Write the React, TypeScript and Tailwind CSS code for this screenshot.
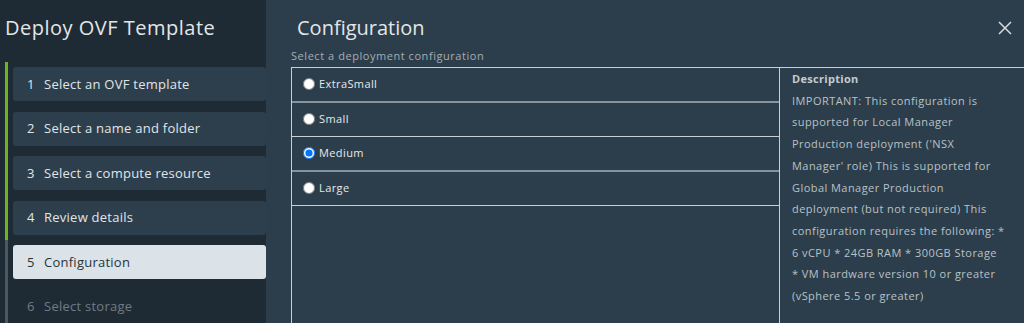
import React from 'react';

const steps = [
  { n: 1, label: 'Select an OVF template', state: 'done' },
  { n: 2, label: 'Select a name and folder', state: 'done' },
  { n: 3, label: 'Select a compute resource', state: 'done' },
  { n: 4, label: 'Review details', state: 'done' },
  { n: 5, label: 'Configuration', state: 'current' },
  { n: 6, label: 'Select storage', state: 'todo' },
];

const configs = [
  { name: 'ExtraSmall', border: 'border-b-2 border-[#87929a]' },
  { name: 'Small', border: 'border-b border-[#c9d0d5]' },
  { name: 'Medium', border: 'border-b-2 border-[#87929a]', checked: true },
  { name: 'Large', border: 'border-b border-[#c9d0d5]' },
];

const description = [
  'IMPORTANT: This configuration is',
  'supported for Local Manager',
  "Production deployment ('NSX",
  "Manager' role) This is supported for",
  'Global Manager Production',
  'deployment (but not required) This',
  'configuration requires the following: *',
  '6 vCPU * 24GB RAM * 300GB Storage',
  '* VM hardware version 10 or greater',
  '(vSphere 5.5 or greater)',
];

export default function App() {
  return (
    <div className="flex h-[323px] w-[1024px] overflow-hidden bg-[#2c3e4b] font-['Open_Sans',sans-serif]">
      {/* Wizard sidebar */}
      <aside className="w-[266px] shrink-0 bg-[#1f2b34]">
        <h1 className="pl-[5px] pt-[14px] text-[20px] leading-[28px] text-[#e3e6e8] tracking-[0.5px]">
          Deploy OVF Template
        </h1>
        <ol className="mt-[20px] ml-[5px]">
          {steps.map((s) => (
            <li
              key={s.n}
              className={`flex h-[44.5px] items-center border-l-[3px] pl-[5px] ${
                s.state === 'done' ? 'border-[#6cb31e]' : 'border-[#4b5861]'
              }`}
            >
              <div
                className={`flex h-[34px] w-full items-center rounded-[3px] pl-[14px] text-[13px] tracking-[0.25px] ${
                  s.state === 'done'
                    ? 'bg-[#2d3f4c] text-[#e1e5e8]'
                    : s.state === 'current'
                    ? 'bg-[#dbe3e9] text-[#2a343b]'
                    : 'text-[#6f7b84]'
                }`}
              >
                <span className="w-[17px]">{s.n}</span>
                <span>{s.label}</span>
              </div>
            </li>
          ))}
        </ol>
      </aside>

      {/* Main panel */}
      <main className="flex min-w-0 flex-1 flex-col pl-[25px]">
        <div className="flex items-center justify-between pt-[14px]">
          <h2 className="pl-[6px] text-[20px] leading-[28px] text-[#e3e6e8]">Configuration</h2>
          <button className="mr-[12px] text-[#d5dbdf]">
            <svg width="14" height="14" viewBox="0 0 14 14" fill="none" stroke="currentColor" strokeWidth="1.5">
              <path d="M1 1l12 12M13 1L1 13" />
            </svg>
          </button>
        </div>
        <p className="mt-[6px] text-[11px] leading-[16px] tracking-[0.55px] text-[#a3adb4]">
          Select a deployment configuration
        </p>

        <div className="mt-[3px] flex flex-1 border-l border-t border-[#c9d0d5]">
          <div className="w-[488px] shrink-0 border-r border-[#c9d0d5]">
            {configs.map((c) => (
              <label
                key={c.name}
                className={`flex h-[34.5px] items-center gap-[4px] pl-[11px] text-[11px] tracking-[0.4px] text-[#e6e9eb] ${c.border}`}
              >
                <input
                  type="radio"
                  name="config"
                  defaultChecked={c.checked}
                  className="m-0 h-[12px] w-[12px]"
                />
                {c.name}
              </label>
            ))}
          </div>
          <div className="w-[230px] pl-[12px] text-[11px] leading-[21.7px] tracking-[0.45px] text-[#b9c1c7]">
            <div className="font-bold tracking-[0.3px] text-[#c4cbd0]">Description</div>
            {description.map((line) => (
              <div key={line} className="whitespace-nowrap">
                {line}
              </div>
            ))}
          </div>
        </div>
      </main>
    </div>
  );
}
